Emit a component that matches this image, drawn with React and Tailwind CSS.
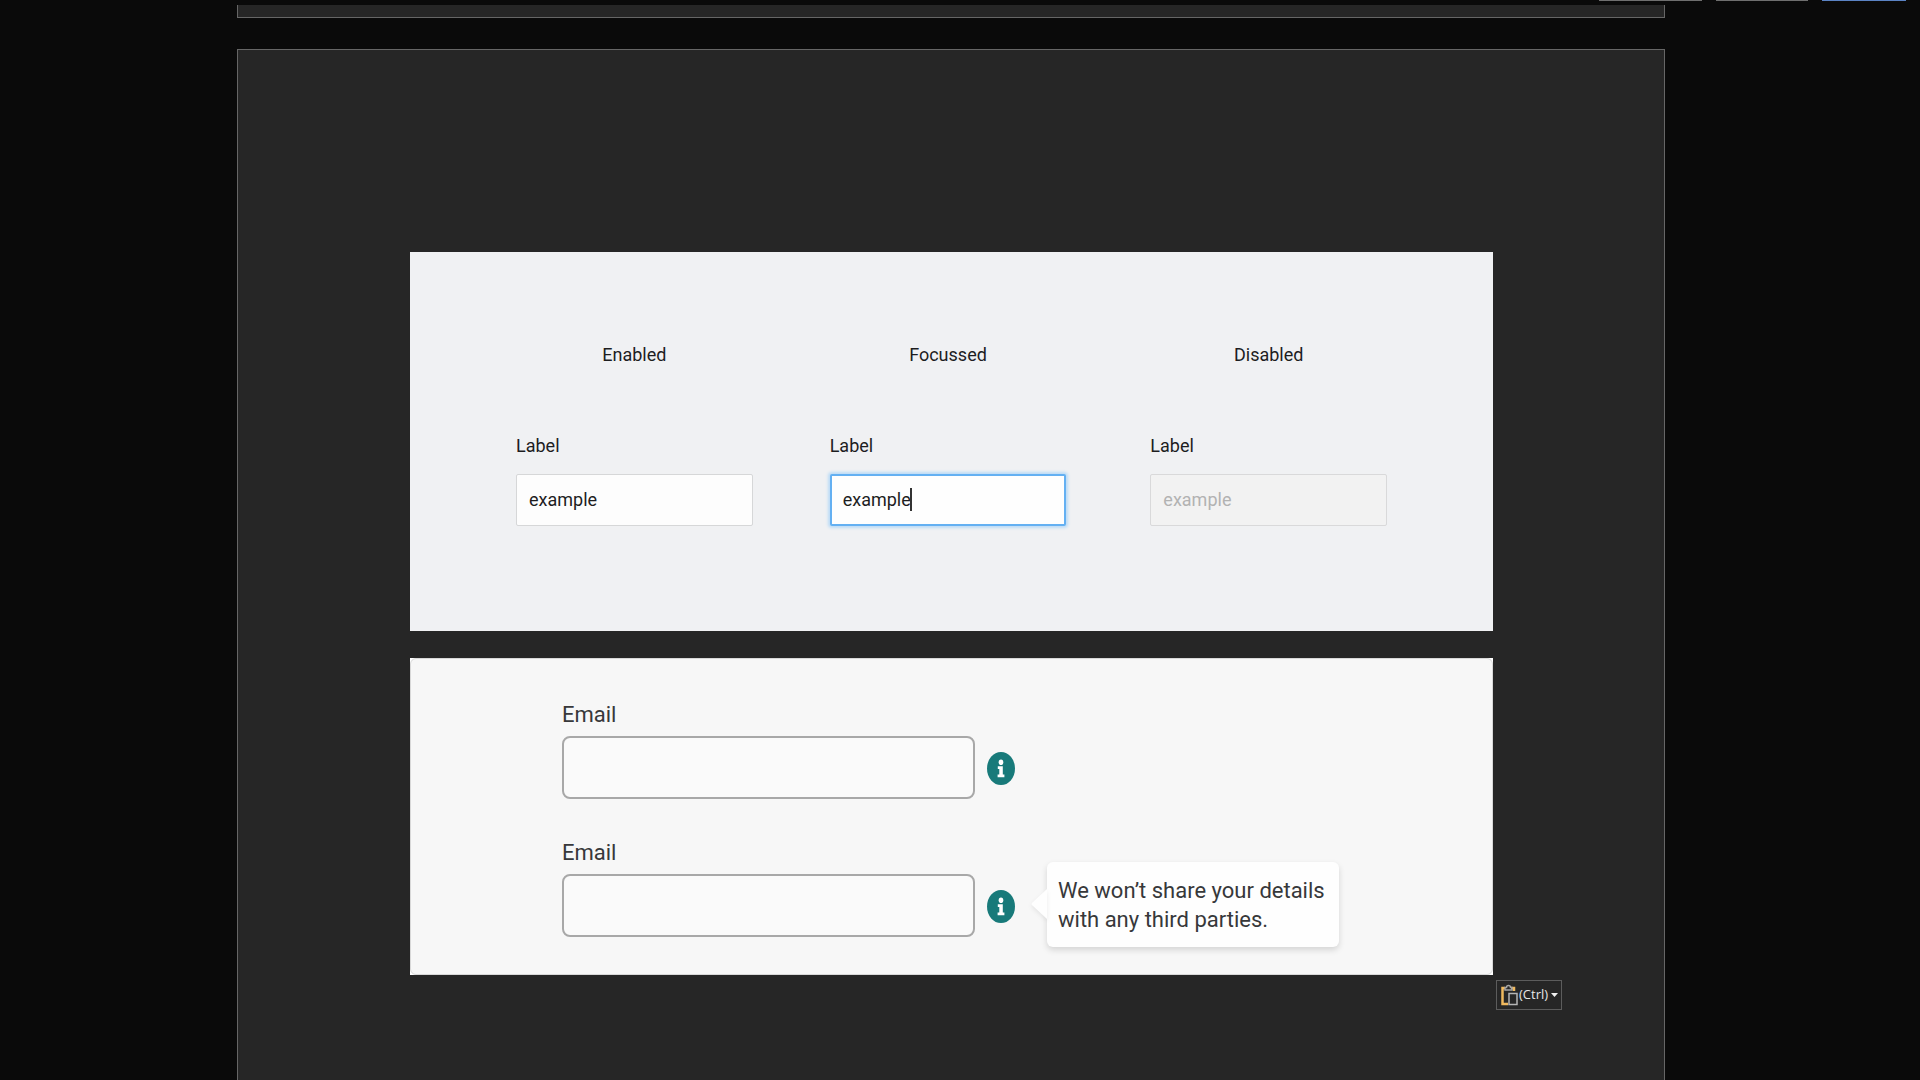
import React, { useState } from 'react';

const textFields = [
    { id: 'enabled', title: 'Enabled', column: '', input: 'border border-[#d6d7d8] bg-[#fdfdfd] px-[12px] text-[#1d1d1f]' },
    {
        id: 'focussed',
        title: 'Focussed',
        column: 'ml-[77px]',
        input: 'border-2 border-[#64b0f2] bg-[#fefefe] px-[11px] text-[#1d1d1f] caret-transparent shadow-[0_0_3px_2px_#bcdcf6]',
        caret: true,
    },
    { id: 'disabled', title: 'Disabled', column: 'ml-[84px]', input: 'border border-[#d9d9da] bg-[#f2f2f2] px-[12px] text-[#b2b2b2]', disabled: true },
];

const TextField = ({ field }) => {
    const [value, setValue] = useState('example');

    return (
        <div className={`min-w-0 flex-1 ${field.column}`}>
            <h2 className="text-center text-[18px] leading-[24px] text-[#1d1d1f]">{field.title}</h2>
            <label htmlFor={field.id} className="mt-[67px] block text-[18px] leading-[24px] text-[#1d1d1f]">Label</label>
            <div className="relative mt-[16px]">
                <input
                    id={field.id}
                    type="text"
                    value={value}
                    onChange={(e) => setValue(e.target.value)}
                    disabled={field.disabled}
                    className={`block h-[52px] w-full rounded-xs pb-[2px] text-[18px] outline-none ${field.input}`}
                />
                {field.caret && <span className="absolute top-[14px] left-[80px] h-[23px] w-[2px] bg-[#333333]" />}
            </div>
        </div>
    );
};

const InfoIcon = () => (
    <svg width="28" height="33" viewBox="0 0 28 33" aria-hidden="true">
        <ellipse cx="14" cy="16.5" rx="14" ry="16.5" fill="#187a7a" />
        <ellipse cx="14" cy="10.3" rx="2.3" ry="2.8" fill="#fff" />
        <path d="M10.8 14.3h5v8.2h1.6v2.7h-6.8v-2.7h1.7v-5.5h-1.5z" fill="#fff" />
    </svg>
);

const EmailField = ({ id, hint }) => {
    const [email, setEmail] = useState('');

    return (
        <div>
            <label htmlFor={id} className="block text-[22px] leading-[28px] text-[#37383a]">Email</label>
            <div className="mt-[7px] flex items-center">
                <input
                    id={id}
                    type="email"
                    value={email}
                    onChange={(e) => setEmail(e.target.value)}
                    className="h-[63px] min-w-0 flex-1 rounded-lg border-2 border-[#a8a8a8] bg-[#fafafa] px-3 text-[22px]"
                />
                <div className="relative ml-[12px]">
                    <button type="button" aria-label="More information" className="block pt-[2px]">
                        <InfoIcon />
                    </button>
                    {hint && (
                        <div role="tooltip" className="absolute bottom-[-24px] left-full ml-[32px] w-[292px] rounded-md bg-[#fefefe] pt-[14px] pr-[12px] pb-[13px] pl-[11px] text-[22px] leading-[29px] text-[#37383a] shadow-[0_3px_6px_rgba(0,0,0,0.14)]">
                            <svg width="16" height="30" viewBox="0 0 16 30" className="absolute top-[27px] right-full drop-shadow-[0_2px_2px_rgba(0,0,0,0.08)]" aria-hidden="true">
                                <path d="M16 0v30L1 16q-1-1 0-2z" fill="#fefefe" />
                            </svg>
                            {hint}
                        </div>
                    )}
                </div>
            </div>
        </div>
    );
};

const PasteOptions = () => (
    <button type="button" className="absolute top-full left-full mt-[5px] ml-[3px] flex h-[30px] w-[66px] items-center border border-[#5c5c5c] bg-[#262626] pl-[4px] font-['Open_Sans',sans-serif] text-[13px] text-[#e6e6e6]">
        <svg width="17" height="22" viewBox="0 0 17 22" fill="none" className="shrink-0" aria-hidden="true">
            <path d="M4 4H1.500v16H7M10 4h3v3" stroke="#f0b95e" strokeWidth="2.500" />
            <path d="M4 6V3.500h1.500a2 2 0 0 1 4 0H11V6z" stroke="#a5a5a5" strokeWidth="1.500" />
            <path d="M8 9.500h8v11H8z" fill="#262626" stroke="#b5b5b5" strokeWidth="1.500" />
        </svg>
        <span className="ml-px">(Ctrl)</span>
        <svg width="7" height="4" viewBox="0 0 7 4" className="ml-[3px] shrink-0" aria-hidden="true">
            <path d="M0 0h7L3.500 4z" fill="#f0f0f0" />
        </svg>
    </button>
);

const App = () => (
    <div className="flex h-screen flex-col overflow-hidden bg-[#0a0a0a] font-[Roboto,sans-serif]">
        <div className="flex h-[5px] justify-end gap-[14px] pr-[14px]">
            <div className="h-px w-[103px] bg-[#6f6f6f]" />
            <div className="h-px w-[92px] bg-[#6f6f6f]" />
            <div className="h-px w-[84px] bg-[#5b83c4]" />
        </div>
        <div className="mr-[255px] ml-[237px] h-[13px] shrink-0 border border-t-0 border-[#666666] bg-[#262626]" />
        <main className="mt-[31px] mr-[255px] ml-[237px] flex-1 border border-b-0 border-[#666666] bg-[#262626] pt-[202px] pr-[171px] pl-[172px]">
            <section className="flex bg-[#f0f1f3] px-[106px] pt-[91px] pb-[105px]">
                {textFields.map((field) => (
                    <TextField key={field.id} field={field} />
                ))}
            </section>
            <section className="relative mt-[27px] bg-white">
                <div className="rounded-md border border-[#d8d8d8] bg-[#f7f7f7] pt-[42px] pr-[477px] pb-[37px] pl-[151px]">
                    <EmailField id="email" />
                    <div className="mt-[40px]">
                        <EmailField id="email-hint" hint="We won’t share your details with any third parties." />
                    </div>
                </div>
                <PasteOptions />
            </section>
        </main>
    </div>
);

export default App;
